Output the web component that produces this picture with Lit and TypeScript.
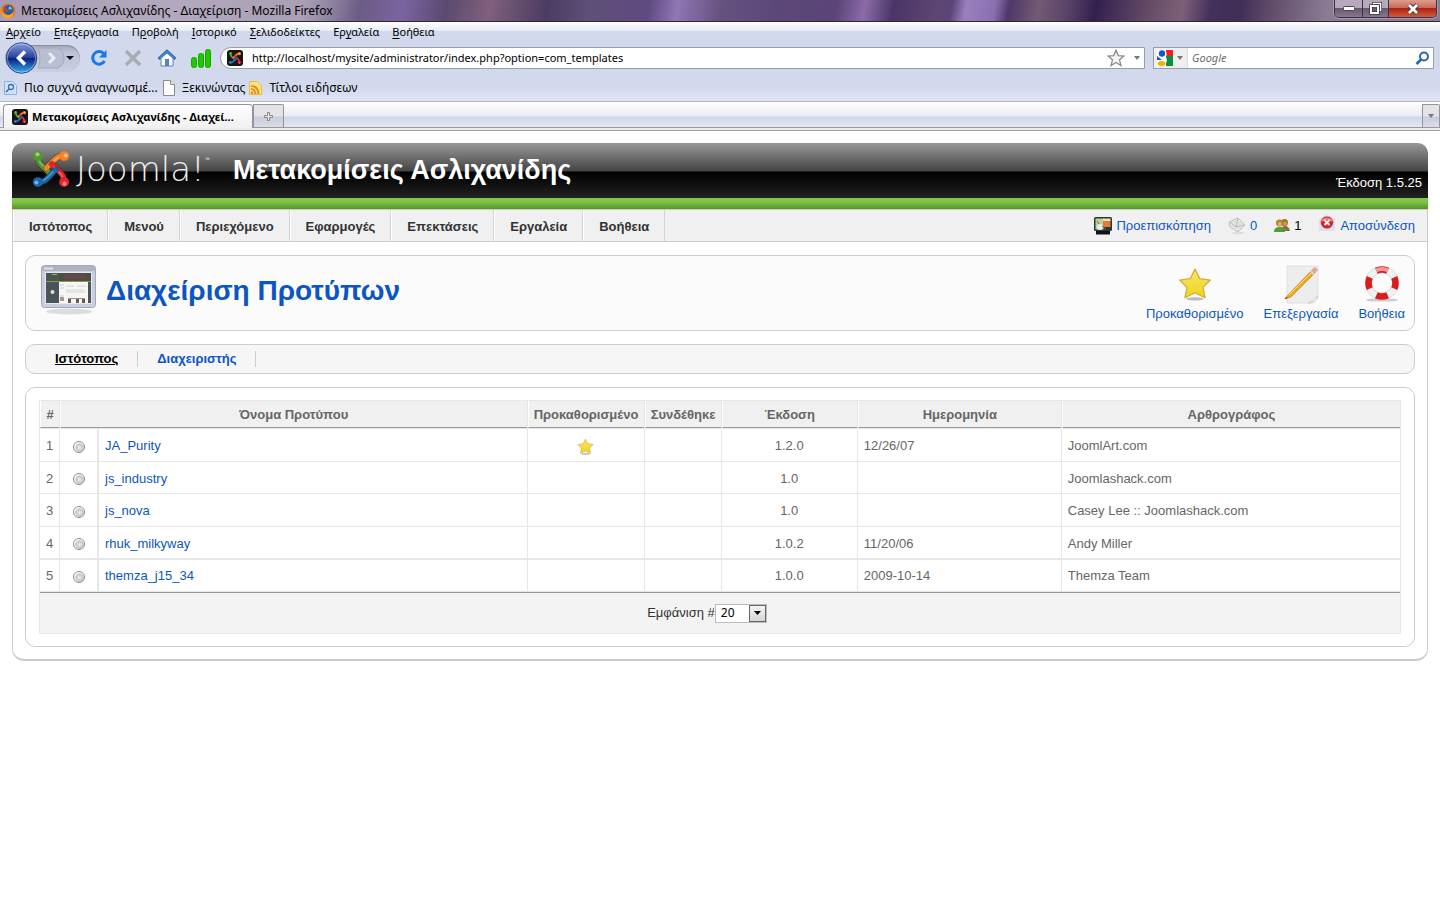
import { LitElement, html, svg, css } from "lit";
import { customElement, state } from "lit/decorators.js";

const knotArm = "M6.5 6.5C6 12 8 14 11 17L19 25";
const star = "M12 1.5l3 7.3 7.6.6-5.9 5 1.9 7.6-6.6-4.1-6.6 4.1 1.9-7.6-5.9-5 7.6-.6z";

const knot = () => svg`
  ${[["#4f9a2b", 0], ["#f58220", 90], ["#e0262c", 180], ["#1466ae", 270]].map(
    ([c, a]) => svg`<g transform="rotate(${a} 20 20)" fill="none" stroke=${c} stroke-linecap="round">
      <path d=${knotArm} stroke="#222" stroke-opacity=".45" stroke-width="7"/>
      <path d=${knotArm} stroke-width="5.6"/>
      <circle cx="6.2" cy="6.2" r="5.2" fill=${c} stroke="none"/>
      <path d="M8 12c1 3 3 4 9 10" stroke="#fff" stroke-opacity=".3" stroke-width="1.6"/>
      <circle cx="5.8" cy="4.6" r="2.2" fill="#fff" fill-opacity=".45" stroke="none"/></g>`
  )}`;

const knotTile = html`<svg class="i16" viewBox="0 0 48 48" aria-hidden="true">
  <rect width="48" height="48" rx="9" fill="#161616"/><g transform="translate(5 5) scale(.95)">${knot()}</g></svg>`;

interface Template {
  name: string;
  isDefault?: boolean;
  version: string;
  date: string;
  author: string;
}

@customElement("browser-chrome")
class BrowserChrome extends LitElement {
  static styles = css`
    :host { display: block; font: 12px/16px "Noto Sans", "Open Sans", sans-serif; color: #000; }
    button, input { font: inherit; color: inherit; border: 0; background: none; padding: 0; margin: 0; }
    button { display: flex; align-items: center; justify-content: center; }
    svg { display: block; flex: none; }
    .i16 { width: 16px; height: 16px; }
    .title {
      display: flex; align-items: center; justify-content: space-between; height: 21px; border-bottom: 1px solid #2c2440;
      background: linear-gradient(100deg, #a79cb4 0, #b3a9be 12%, #aaa0b6 21%, #8f84a0 23%, #6b5c84 25%, #7a64a0 28%, #5b4a70 31%, #80607c 34%, #4b3c62 38%, #5e5078 41%, #5f4a80 45%, #8f76b5 47%, #66527f 50%, #5c4878 54%, #5a4478 58%, #8b6ba8 60%, #4a3566 62%, #5f4572 65%, #5a4478 66%, #9a80bd 67%, #8a6fb0 69%, #4d3868 70%, #735a74 72%, #5b4468 74%, #33204e 76%, #6a4f68 80%, #7d6078 82%, #44305c 84%, #3f2e55 86%, #5f4a68 88%, #8a7c92 92%, #8a7c92 100%);
    }
    .caption { display: flex; align-items: center; gap: 5px; white-space: nowrap; }
    .winbtns { display: flex; align-self: flex-start; margin-right: 3px; border: 1px solid #3b3048; border-top: 0; border-radius: 0 0 5px 5px; overflow: hidden; box-shadow: 0 0 0 1px #cfc6d866; }
    .winbtns button { width: 28px; height: 17px; background: linear-gradient(#b5a9bb 0 45%, #67596f 50%, #85788f); border-right: 1px solid #3b3048; }
    .winbtns .mid { width: 26px; }
    .winbtns .close { width: 47px; border: 0; background: linear-gradient(#dd9d90 0, #ca6a58 45%, #ae2413 50%, #cf5c3e); }
    .bars { background: linear-gradient(#fff 0, #e7ebf5 9px, #d3d9ec 9px, #d3d9ec 64px, #dfe4f4 100%); border-bottom: 1px solid #b4b6c4; }
    .menu { display: flex; gap: 13px; height: 20px; padding-left: 6px; font-size: 11px; }
    .menu u { text-underline-offset: 2px; }
    .nav { display: flex; align-items: center; height: 32px; padding: 0 6px 0 5px; }
    .history { display: flex; align-items: center; width: 75px; height: 27px; border-radius: 14px; background: linear-gradient(#a4a9b8, #bfc5d6 30%, #c9cfe0); box-shadow: inset 0 1px 1px #858a9a; }
    .tools { display: flex; gap: 14px; margin: 0 9px 0 9px; }
    .tools button { width: 20px; height: 24px; }
    .field { display: flex; align-items: center; height: 20px; border: 1px solid #999da8; background: #fff; }
    .url { flex: 1; border-radius: 11px 0 0 11px; padding: 0 4px 0 6px; gap: 9px; }
    .url input { flex: 1; min-width: 0; font-size: 11px; }
    .search { width: 276px; margin-left: 8px; padding-right: 3px; }
    .search input { flex: 1; min-width: 0; font: italic 11px/16px "Noto Sans", sans-serif; padding-left: 4px; }
    .search input::placeholder { color: #6d6d6d; opacity: 1; }
    .engine { display: flex; align-items: center; gap: 4px; height: 20px; padding: 0 4px 0 3px; background: #efeff0; border-right: 1px solid #dcdcdc; }
    .drop { width: 0; height: 0; border: 3px solid transparent; border-top: 4px solid #777; border-bottom: 0; }
    .history .drop { border-width: 4px 4px 0; border-top-color: #111; }
    .marks { display: flex; gap: 3px; height: 26px; padding: 1px 0 0 3px; }
    .marks button { gap: 5px; }
    .tabs { display: flex; align-items: flex-end; height: 25px; padding-left: 3px; background: linear-gradient(#fff 0, #e9ecf6 14px, #cfd6ea 15px, #e4e8f5); border-bottom: 1px solid #999; }
    .tab { display: flex; align-items: center; justify-content: flex-start; gap: 4px; box-sizing: border-box; width: 250px; height: 24px; margin-bottom: -1px; padding: 0 4px 0 8px; border: 1px solid #94959b; border-bottom: 0; border-radius: 4px 4px 0 0; background: linear-gradient(#fff, #f0f0f0); font: bold 11px/16px "Noto Sans", sans-serif; white-space: nowrap; }
    .plus { box-sizing: border-box; width: 31px; height: 23px; border: 1px solid #94959b; border-bottom: 0; background: linear-gradient(#e4e4e8 50%, #c9cedd 55%, #d8dce8); border-radius: 0 2px 0 0; }
    .all { margin-left: auto; width: 18px; }
    .edge { height: 2px; background: #ececec; border-bottom: 1px solid #a0a0a0; }
  `;

  render() {
    const menus = [["", "Α", "ρχείο"], ["", "Ε", "πεξεργασία"], ["Π", "ρ", "οβολή"], ["", "Ι", "στορικό"], ["", "Σ", "ελιδοδείκτες"], ["Ερ", "γ", "αλεία"], ["", "Β", "οήθεια"]];
    return html`
      <header class="title">
        <div class="caption">
          <svg class="i16" viewBox="0 0 16 16" aria-hidden="true"><circle cx="8" cy="8" r="7.6" fill="#e2761b"/><circle cx="8.6" cy="7" r="5" fill="#2d5b9e"/><path d="M9 3.5c2 0 3 1.600 3 3l-2-.5-1.500 1z" fill="#8ec4ea"/><path d="M1 4c0 6 3 8 7 8 3 0 5-2 5.500-4C14 13 11 15.600 8 15.600 3 15.600-.5 10 1 4z" fill="#f6a62b"/><path d="M3 4l3 1.500L8.500 8 6 9z" fill="#c84d0c"/></svg>
          <span>Μετακομίσεις Ασλιχανίδης - Διαχείριση - Mozilla Firefox</span>
        </div>
        <div class="winbtns">
          <button aria-label="Ελαχιστοποίηση"><svg width="12" height="5"><rect x=".5" y=".5" width="11" height="4" rx="1" fill="#fff" stroke="#4a4356"/></svg></button>
          <button class="mid" aria-label="Επαναφορά"><svg width="13" height="13" fill="none"><path d="M4.500 3V1.500h7v7H10" stroke="#3c3548" stroke-width="3"/><path d="M4.500 3V1.500h7v7H10" stroke="#fff" stroke-width="1.500"/><rect x="2" y="4" width="7" height="7" stroke="#3c3548" stroke-width="3.500"/><rect x="2" y="4" width="7" height="7" stroke="#fff" stroke-width="2"/></svg></button>
          <button class="close" aria-label="Κλείσιμο"><svg width="14" height="12" viewBox="0 0 14 12"><path d="M3 2l8 8M11 2l-8 8" stroke="#4d3540" stroke-width="4.600"/><path d="M3 2l8 8M11 2l-8 8" stroke="#fff" stroke-width="2.800"/></svg></button>
        </div>
      </header>
      <div class="bars">
        <nav class="menu">${menus.map(([a, u, b]) => html`<button><span>${a}<u>${u}</u>${b}</span></button>`)}</nav>
        <div class="nav">
          <div class="history">
            <button aria-label="Πίσω"><svg width="33" height="32" viewBox="0 0 33 32"><defs><linearGradient id="b" x2="0" y2="1"><stop stop-color="#8aa0dc"/><stop offset=".48" stop-color="#27409e"/><stop offset=".52" stop-color="#0a1f80"/><stop offset="1" stop-color="#35b3f2"/></linearGradient></defs><circle cx="16.500" cy="16" r="15.300" fill="url(#b)" stroke="#2f4585"/><circle cx="16.500" cy="16" r="14.200" fill="none" stroke="#fff" stroke-opacity=".4"/><path d="M20 9.500L13.500 16l6.500 6.500" fill="none" stroke="#fff" stroke-width="3.500"/></svg></button>
            <button aria-label="Εμπρός"><svg width="28" height="24" viewBox="0 0 28 24"><path d="M0 2h19q7 2 7 10t-7 10H0q4-10 0-20z" fill="#b9bfd0" stroke="#a3a9bb"/><path d="M11 7l5 5-5 5" fill="none" stroke="#e8ecf4" stroke-width="3"/></svg></button>
            <button aria-label="Ιστορικό σελίδων"><span class="drop"></span></button>
          </div>
          <div class="tools">
            <button aria-label="Ανανέωση"><svg width="18" height="18" viewBox="0 0 18 18"><path d="M14.500 12A6.300 6.300 0 1 1 13.500 4.500" fill="none" stroke="#1778e8" stroke-width="3"/><path d="M16.500 1v7.500H9z" fill="#1778e8"/></svg></button>
            <button aria-label="Διακοπή"><svg width="18" height="18" viewBox="0 0 18 18"><path d="M2 2l14 14M16 2L2 16" stroke="#a9acb5" stroke-width="3.500"/></svg></button>
            <button aria-label="Αρχική"><svg width="20" height="18" viewBox="0 0 20 18"><path d="M4 9v8h12V9l-6-5z" fill="#fbfcff" stroke="#5d83bf"/><path d="M1.500 10L10 2l8.500 8" fill="none" stroke="#2c62b4" stroke-width="2.600"/><path d="M2.500 9.500L10 2.500l7.500 7" fill="none" stroke="#6ea0e4"/><rect x="8" y="10" width="4" height="7" fill="#5383c9"/></svg></button>
            <button aria-label="Σήμα"><svg width="20" height="19" viewBox="0 0 20 19" fill="#20c800" stroke="#13a600"><rect x=".5" y="8.500" width="5" height="10" rx="2"/><rect x="7.500" y="4.500" width="5" height="14" rx="2"/><rect x="14.500" y=".5" width="5" height="18" rx="2"/></svg></button>
          </div>
          <div class="field url">
            ${knotTile}
            <input aria-label="Διεύθυνση" .value=${"http://localhost/mysite/administrator/index.php?option=com_templates"} />
            <button aria-label="Σελιδοδείκτης"><svg width="18" height="18" viewBox="0 0 24 24"><path d=${star} fill="#f5f5f5" stroke="#8d8d8d" stroke-width="1.800"/></svg></button>
            <button aria-label="Πρόσφατα"><span class="drop"></span></button>
          </div>
          <div class="field search">
            <button class="engine" aria-label="Μηχανή αναζήτησης"><svg class="i16" viewBox="0 0 16 16"><rect width="16" height="16" fill="#fff"/><path d="M9 0h7v6H9z" fill="#e22"/><path d="M9 6h7v10H9z" fill="#0a8f3c"/><circle cx="5" cy="3.500" r="3.200" fill="#1358c8"/><path d="M0 6l5 4H0z" fill="#1358c8"/><ellipse cx="4.500" cy="13.500" rx="4" ry="2.500" fill="#f4b20a"/><path d="M8 0c3 4 1 6 1 7s2 3 0 6l-2-3 1-3z" fill="#fff"/></svg><span class="drop"></span></button>
            <input placeholder="Google" aria-label="Αναζήτηση" />
            <button aria-label="Εύρεση"><svg width="15" height="15" viewBox="0 0 15 15" fill="none" stroke="#2767ad"><circle cx="9" cy="5.500" r="4" stroke-width="2"/><path d="M6 8.500L1.500 13" stroke-width="2.600"/></svg></button>
          </div>
        </div>
        <nav class="marks">
          <button><svg class="i16" viewBox="0 0 16 16"><path d="M1.500 1.500h8l4 4v9h-12z" fill="#cfe2f8" stroke="#8db3dc"/><circle cx="8" cy="7" r="2.500" fill="none" stroke="#3a6eaa" stroke-width="1.300"/><path d="M6 9l-3 3" stroke="#3a6eaa" stroke-width="1.600"/></svg>Πιο συχνά αναγνωσμέ...</button>
          <button><svg class="i16" viewBox="0 0 16 16"><path d="M2.500.5h7l4 4v11h-11z" fill="#fff" stroke="#8d8d8d"/><path d="M9.500.5v4h4" fill="#eee" stroke="#8d8d8d"/></svg>Ξεκινώντας</button>
          <button><svg class="i16" viewBox="0 0 16 16"><path d="M1.500 1.500h8l4 4v9h-12z" fill="#fcdf7e" stroke="#e8bc45"/><path d="M3 6q7 0 7.500 8M3 9q4 0 4.500 5" fill="none" stroke="#e2861a" stroke-width="1.700"/><circle cx="4" cy="12.800" r="1.200" fill="#e2861a"/></svg>Τίτλοι ειδήσεων</button>
        </nav>
      </div>
      <div class="tabs">
        <button class="tab">${knotTile}<span>Μετακομίσεις Ασλιχανίδης - Διαχεί...</span></button>
        <button class="plus" aria-label="Νέα καρτέλα"><svg width="9" height="9" viewBox="0 0 9 9"><path d="M3.500.5h2v3h3v2h-3v3h-2v-3h-3v-2h3z" fill="#e9e9e9" stroke="#888"/></svg></button>
        <button class="plus all" aria-label="Λίστα καρτελών"><span class="drop"></span></button>
      </div>
      <div class="edge"></div>
    `;
  }
}

@customElement("joomla-admin")
class JoomlaAdmin extends LitElement {
  @state() private templates: Template[] = [
    { name: "JA_Purity", isDefault: true, version: "1.2.0", date: "12/26/07", author: "JoomlArt.com" },
    { name: "js_industry", version: "1.0", date: "", author: "Joomlashack.com" },
    { name: "js_nova", version: "1.0", date: "", author: "Casey Lee :: Joomlashack.com" },
    { name: "rhuk_milkyway", version: "1.0.2", date: "11/20/06", author: "Andy Miller" },
    { name: "themza_j15_34", version: "1.0.0", date: "2009-10-14", author: "Themza Team" },
  ];

  static styles = css`
    :host { display: block; padding: 12px; font: 13px/16px "Liberation Sans", Arial, sans-serif; color: #666; }
    a { color: #0b55c4; text-decoration: none; }
    svg { display: block; flex: none; }
    .i16 { width: 16px; height: 16px; }
    .head { display: flex; align-items: center; height: 55px; padding: 0 6px 0 20px; border-radius: 10px 10px 0 0; color: #fff; background: linear-gradient(#999 0, #444 28px, #000 29px, #222 100%); }
    .logo { display: flex; align-items: center; width: 201px; gap: 6px; padding-bottom: 4px; }
    .wordmark { font: 200 34px/40px "DejaVu Sans", sans-serif; color: #eee; }
    .tm { align-self: flex-start; margin-left: -6px; font-size: 5px; line-height: 20px; }
    .site { font: bold 27px/32px "Liberation Sans", Arial, sans-serif; margin: 0; padding-bottom: 2px; }
    .version { margin-left: auto; align-self: flex-end; padding-bottom: 7px; }
    .green { height: 11px; background: linear-gradient(#85c850, #7bc143 40%, #559427); }
    .body { border: 1px solid #ccc; border-bottom-width: 2px; border-radius: 0 0 12px 12px; }
    .menubar { display: flex; align-items: stretch; height: 31px; background: #f0f0f0; border-bottom: 1px solid #ccc; }
    .menubar a.item { display: flex; align-items: center; padding: 2px 15px 0; border-left: 1px solid #fff; border-right: 1px solid #d4d4d4; color: #333; font-weight: bold; }
    .status { display: flex; align-items: center; margin-left: auto; padding-right: 12px; gap: 17px; color: #000; }
    .status > * { display: flex; align-items: center; gap: 4px; }
    .content { display: flex; flex-direction: column; gap: 13px; padding: 13px 12px 12px; }
    .box { border: 1px solid #ccc; border-radius: 10px; }
    .heading { display: flex; align-items: center; height: 74px; padding: 0 9px 0 14px; background: #fbfbfb; }
    .heading h1 { margin: 0 auto 4px 8px; font: bold 28px/32px "Liberation Sans", Arial, sans-serif; color: #0b55c4; }
    .pageicon { margin-bottom: 6px; }
    .actions { display: flex; gap: 20px; }
    .actions a { display: flex; flex-direction: column; align-items: center; gap: 2px; }
    .actions .pic { display: flex; align-items: center; height: 40px; }
    .submenu { display: flex; align-items: center; height: 28px; padding-left: 10px; background: #f6f6f6; font-weight: bold; }
    .submenu a { padding: 0 19px; border-right: 1px solid #ccc; }
    .submenu .on { color: #000; text-decoration: underline; }
    .list { padding: 12px 13px; }
    table { width: 100%; table-layout: fixed; border-collapse: separate; border-spacing: 1px; background: #e7e7e7; color: #666; }
    td, th { box-sizing: border-box; padding: 2px 0 0; }
    th { height: 27px; background: #f0f0f0; border-bottom: 1px solid #999; border-left: 1px solid #fff; text-align: center; white-space: nowrap; }
    tbody td { height: 32px; background: #fff; padding: 2px 6px 0; }
    tbody tr:nth-child(even) td { height: 31px; }
    tbody td.mid { text-align: center; padding: 2px 0 0; }
    tbody td.name { border-left: 1px solid #e7e7e7; }
    tbody tr:last-child td { border-top: 1px solid #e7e7e7; padding-top: 1px; }
    .mid svg, .mid input { margin: 0 auto; display: block; }
    input[type="radio"] { appearance: none; width: 12px; height: 12px; border: 1px solid #8a8a8a; border-radius: 50%; background: radial-gradient(circle at 55% 55%, #eee 0, #bfc1c5 50%, #fff 58%); }
    tbody tr td.pick { padding-top: 3px; }
    tfoot td { height: 41px; padding: 0; background: #f3f3f3; border-top: 1px solid #999; color: #333; }
    .pager { display: flex; align-items: center; justify-content: center; padding-right: 26px; }
    .select { position: relative; display: flex; }
    select { appearance: none; box-sizing: border-box; width: 52px; height: 19px; margin: 0; padding: 0 0 0 5px; border: 1px solid #bbb; border-radius: 0; background: #fff; color: #000; font: 12px/16px "Noto Sans", sans-serif; }
    .arrow { position: absolute; right: 1px; top: 1px; bottom: 1px; width: 17px; box-sizing: border-box; border: 1px solid #666; background: linear-gradient(#f4f4f4, #d4d4d4); display: flex; align-items: center; justify-content: center; pointer-events: none; }
    .c-num { width: 19px; } .c-pick { width: 37px; } .c-def { width: 116px; } .c-asg { width: 76px; }
    .c-ver { width: 10%; } .c-date { width: 15%; } .c-auth { width: 25%; }
  `;

  private starIcon(size: number) {
    return html`<svg width=${size} height=${size} viewBox="0 0 24 24" aria-hidden="true">
      <defs><linearGradient id="s" x2="0" y2="1"><stop stop-color="#f7e46c"/><stop offset="1" stop-color="#eed813"/></linearGradient></defs>
      <ellipse cx="12" cy="22.500" rx="6" ry="1.200" fill="#bbb"/>
      <path d="M12 1.500l3.300 6.700 7.500 1-5.200 5.200 1.500 7.300-7.100-3.500-7.100 3.500 1.500-7.300-5.200-5.200 7.500-1z" fill="url(#s)" stroke="#d7a83c" stroke-width=".9" stroke-linejoin="round"/></svg>`;
  }

  render() {
    const menu = ["Ιστότοπος", "Μενού", "Περιεχόμενο", "Εφαρμογές", "Επεκτάσεις", "Εργαλεία", "Βοήθεια"];
    return html`
      <header class="head">
        <div class="logo">
          <svg width="38" height="38" viewBox="0 0 40 40" aria-hidden="true">${knot()}</svg>
          <span class="wordmark">Joomla!</span><span class="tm">™</span>
        </div>
        <h2 class="site">Μετακομίσεις Ασλιχανίδης</h2>
        <span class="version">Έκδοση 1.5.25</span>
      </header>
      <div class="green"></div>
      <div class="body">
        <nav class="menubar">
          ${menu.map((m) => html`<a class="item" href="#">${m}</a>`)}
          <div class="status">
            <a href="#"><svg width="18" height="18" viewBox="0 0 18 18" aria-hidden="true"><rect width="18" height="14" rx="1.500" fill="#28393a"/><path d="M1.500 1.500h8v11h-8z" fill="#b9cf9c"/><path d="M9 3h7.500v7H9z" fill="#e07b39"/><path d="M9 1.500h7.500V4H9z" fill="#f3dfb8"/><circle cx="6" cy="10" r="3" fill="#dff0f6"/><path d="M3 4l2 3M8 9l4 3" stroke="#a05a2a"/><path d="M2 14h14v3.500H2z" fill="#111"/></svg>Προεπισκόπηση</a>
            <a href="#"><svg width="18" height="18" viewBox="0 0 18 18" aria-hidden="true"><ellipse cx="10" cy="16" rx="6" ry="1.500" fill="#ddd"/><path d="M1 5l9-4 7 7-7 7-8-5z" fill="#e4e3e3" stroke="#c4c0c0"/><path d="M2 5l6 5 8-2M10 1l-2 9" fill="none" stroke="#bbb6b6"/></svg>0</a>
            <span><svg class="i16" viewBox="0 0 16 16" aria-hidden="true"><circle cx="10.500" cy="4.500" r="3.500" fill="#a8722c"/><path d="M7 13q0-5 4-5t5 5z" fill="#8a6d3a"/><circle cx="5.500" cy="5" r="3.500" fill="#b87f30"/><circle cx="5.700" cy="6" r="2" fill="#e2b063"/><circle cx="11" cy="5.500" r="1.800" fill="#d09c50"/><path d="M0 14q0-5 5.500-5t5.500 5z" fill="#5b9a34"/></svg>1</span>
            <a href="#"><svg width="18" height="22" viewBox="0 0 18 22" aria-hidden="true"><rect x="1" y="3" width="16" height="13" fill="#dfe2ea"/><circle cx="9" cy="7.500" r="6.500" fill="#e01f26" stroke="#c9ccd4"/><path d="M4 6q5-5 10 0" fill="none" stroke="#f7858a" stroke-width="2"/><path d="M6.500 5l5 5M11.500 5l-5 5" stroke="#fff" stroke-width="2"/></svg>Αποσύνδεση</a>
          </div>
        </nav>
        <main class="content">
          <section class="box heading">
            <svg class="pageicon" width="58" height="54" viewBox="0 0 58 54" aria-hidden="true">
              <ellipse cx="29" cy="48.500" rx="23" ry="3" fill="#dcdcde"/><rect x="1.500" y="2.500" width="54" height="42" rx="3" fill="#c9cddf" stroke="#a3a6b6"/><rect x="2" y="3" width="53" height="5" rx="2" fill="#b0b2be"/><path d="M4 5.500h9" stroke="#e0e0e6" stroke-width="2"/>
              <rect x="5" y="9" width="47" height="32" fill="#e6e8f2"/><rect x="6" y="10" width="45" height="30" fill="#4a5559"/><rect x="19" y="10" width="32" height="8" fill="#4b4f44"/><path d="M6 18.500h45" stroke="#83a03c"/><path d="M24 12h22v4H24z" fill="#6d4450"/><path d="M12 11h5v1h-5z" fill="#9bbf30"/>
              <rect x="19" y="19" width="29" height="21" fill="#f6f7f5"/><path d="M20 22h4M20 25h4M26 23h8M37 23h9M26 29h20M26 27h18M20 33h4" stroke="#cfd2cd"/><path d="M28 35h3v5h-3zM36 35h3v5h-3zM42 35h3v5h-3z" fill="#6b5a50"/><path d="M28 35h17v1H28z" fill="#aa8a78"/><path d="M20 34h4v4h-4z" fill="#b89488"/><circle cx="12.500" cy="29" r="2" fill="#e2ded2"/></svg>
            <h1>Διαχείριση Προτύπων</h1>
            <nav class="actions">
              <a href="#"><span class="pic">${this.starIcon(34)}</span>Προκαθορισμένο</a>
              <a href="#"><span class="pic"><svg width="36" height="40" viewBox="0 0 36 40" aria-hidden="true"><path d="M4 2h31v30l-5 7H4z" fill="#ededed" stroke="#e0e0e0"/><path d="M25 39q5-2 10-7-1 7-10 7z" fill="#fafafa" stroke="#ccc"/><path d="M5 31L29 6l3 3L8 33l-6 2z" fill="#eda92c" stroke="#c98510" stroke-width=".7"/><path d="M6 31L30 7" stroke="#ffd97b"/><path d="M29 5l3-2 3 3-3 3z" fill="#e9a29b"/><path d="M27.500 7l3.500 3.500" stroke="#cfd2d6" stroke-width="2"/><path d="M1 35l3-2 .5 1z" fill="#333"/></svg></span>Επεξεργασία</a>
              <a href="#"><span class="pic"><svg width="36" height="38" viewBox="0 0 36 38" aria-hidden="true"><ellipse cx="18" cy="35" rx="16" ry="1.600" fill="#ccc"/><circle cx="18" cy="18" r="13.500" fill="none" stroke="#d8d8d8" stroke-width="7"/><circle cx="18" cy="18" r="13.500" fill="none" stroke="#f2f2f2" stroke-width="5.500"/><circle cx="18" cy="18" r="13.500" fill="none" stroke="#d91c1c" stroke-width="6.600" pathLength="8" stroke-dasharray="1.100 .9" stroke-dashoffset=".55"/><path d="M12 5.500q6-3 12 0" fill="none" stroke="#f59a94" stroke-width="4"/></svg></span>Βοήθεια</a>
            </nav>
          </section>
          <nav class="box submenu"><a class="on" href="#">Ιστότοπος</a><a href="#">Διαχειριστής</a></nav>
          <section class="box list">
            <table>
              <colgroup><col class="c-num" /><col class="c-pick" /><col /><col class="c-def" /><col class="c-asg" /><col class="c-ver" /><col class="c-date" /><col class="c-auth" /></colgroup>
              <thead><tr><th>#</th><th colspan="2">Όνομα Προτύπου</th><th>Προκαθορισμένο</th><th>Συνδέθηκε</th><th>Έκδοση</th><th>Ημερομηνία</th><th>Αρθρογράφος</th></tr></thead>
              <tbody>
                ${this.templates.map((t, i) => html`<tr>
                  <td class="mid">${i + 1}</td>
                  <td class="mid pick"><input type="radio" name="template" aria-label=${t.name} /></td>
                  <td class="name"><a href="#">${t.name}</a></td>
                  <td class="mid">${t.isDefault ? this.starIcon(17) : ""}</td>
                  <td></td>
                  <td class="mid">${t.version}</td>
                  <td>${t.date}</td>
                  <td>${t.author}</td>
                </tr>`)}
              </tbody>
              <tfoot><tr><td colspan="8"><div class="pager"><label for="limit">Εμφάνιση #</label><span class="select"><select id="limit"><option>20</option><option>50</option></select><span class="arrow"><svg width="7" height="4"><path d="M0 0h7L3.500 4z"/></svg></span></span></div></td></tr></tfoot>
            </table>
          </section>
        </main>
      </div>
    `;
  }
}

@customElement("app-root")
class AppRoot extends LitElement {
  static styles = css`:host { display: block; min-height: 100vh; background: #fff; }`;
  render() {
    return html`<browser-chrome></browser-chrome><joomla-admin></joomla-admin>`;
  }
}
